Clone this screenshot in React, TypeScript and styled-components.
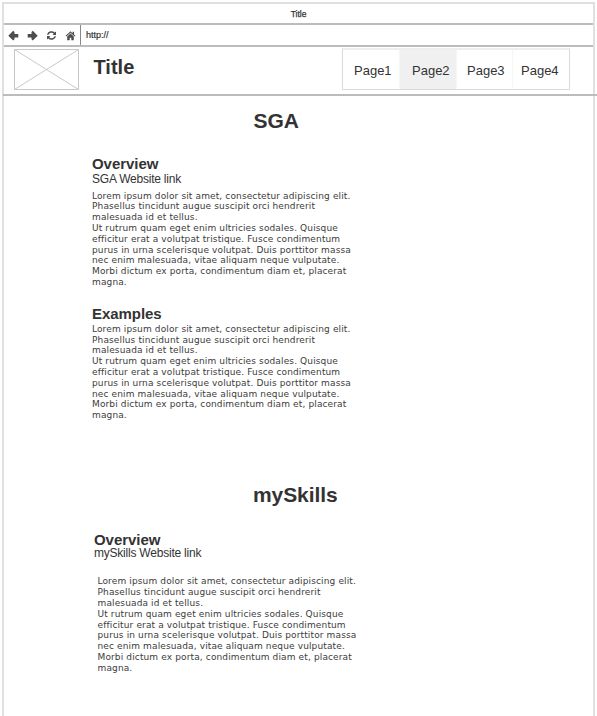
import React from "react";
import styled, { createGlobalStyle } from "styled-components";

const GlobalStyle = createGlobalStyle`
  * { box-sizing: border-box; }
  body { margin: 0; background: #fff; overflow: hidden; }
  h1, h2, h3, p { margin: 0; }
`;

const Window = styled.div`
  width: 595px;
  height: 716px;
  margin-left: 2px;
  padding-top: 2px;
  font-family: "Liberation Sans", Arial, sans-serif;
  color: #333;
`;

const Frame = styled.div`
  width: 593px;
  height: 714px;
  border: 2px solid #e0e0e0;
  border-bottom: 0;
`;

const TitleBar = styled.div`
  height: 21px;
  border-bottom: 2px solid #bcbcbc;
  text-align: center;
  font-size: 8.5px;
  line-height: 21px;
  -webkit-text-stroke: 0.25px #333;
`;

const Toolbar = styled.div`
  display: flex;
  height: 22px;
  border-bottom: 2px solid #bcbcbc;
`;

const Controls = styled.div`
  display: flex;
  align-items: center;
  gap: 8px;
  width: 77px;
  padding-left: 4px;
  border-right: 1px solid #888;
`;

const Icon = styled.svg`
  width: 11px;
  height: 11px;
  fill: #4d4d4d;
  filter: blur(0.45px);
`;

const Address = styled.div`
  padding-left: 5px;
  font-size: 9px;
  line-height: 20px;
  -webkit-text-stroke: 0.2px #333;
`;

const Header = styled.header`
  display: flex;
  width: 594px;
  height: 49px;
  margin-left: -1px;
  padding-left: 11px;
  border-bottom: 2px solid #bcbcbc;
`;

const Placeholder = styled.svg`
  display: block;
  flex: none;
  width: 65px;
  height: 41px;
  margin-top: 2px;
`;

const Brand = styled.h1`
  flex: none;
  width: 263px;
  padding: 8px 0 0 14.5px;
  font-size: 20px;
  line-height: 24px;
`;

const Nav = styled.nav`
  display: flex;
  flex: none;
  width: 228px;
  height: 42px;
  margin-top: 1px;
  border: 1px solid #d9d9d9;
  border-top: 2px solid #eee;
`;

const Tab = styled.a<{ $width: number; $active?: boolean; $inset: number }>`
  width: ${(p) => p.$width}px;
  padding-left: ${(p) => p.$inset}px;
  background: ${(p) => (p.$active ? "#f0f0f0" : "#fff")};
  border-right: 1px solid #f5f5f5;
  font-size: 13px;
  line-height: 41px;
  &:last-child { border-right: 0; }
`;

const Section = styled.section<{ $top: number }>`
  padding-top: ${(p) => p.$top}px;
`;

const SectionTitle = styled.h2<{ $inset: number }>`
  padding-left: ${(p) => p.$inset}px;
  font-size: 21px;
  line-height: 24px;
  letter-spacing: -0.08px;
`;

const Block = styled.div<{ $top: number; $inset: number }>`
  margin: ${(p) => p.$top}px 0 0 ${(p) => p.$inset}px;
`;

const Heading = styled.h3`
  font-size: 15px;
  line-height: 14px;
  letter-spacing: -0.05px;
`;

const LinkText = styled.p<{ $top: number }>`
  margin-top: ${(p) => p.$top}px;
  font-size: 12px;
  line-height: 13px;
  letter-spacing: -0.22px;
`;

const Copy = styled.p<{ $top: number; $shift?: number }>`
  margin: ${(p) => p.$top}px 0 0 ${(p) => p.$shift ?? 0}px;
  color: #3c3c3c;
  font-family: "DejaVu Sans", Verdana, sans-serif;
  font-size: 9px;
  line-height: 10.8px;
  letter-spacing: 0.13px;
  white-space: pre;
`;

const lorem = [
  "Lorem ipsum dolor sit amet, consectetur adipiscing elit.",
  "Phasellus tincidunt augue suscipit orci hendrerit",
  "malesuada id et tellus.",
  "Ut rutrum quam eget enim ultricies sodales. Quisque",
  "efficitur erat a volutpat tristique. Fusce condimentum",
  "purus in urna scelerisque volutpat. Duis porttitor massa",
  "nec enim malesuada, vitae aliquam neque vulputate.",
  "Morbi dictum ex porta, condimentum diam et, placerat",
  "magna.",
].join("\n");

export default function App() {
  return (
    <Window>
      <GlobalStyle />
      <Frame>
        <TitleBar>Title</TitleBar>
        <Toolbar>
          <Controls>
            <Icon viewBox="0 0 11 11">
              <path d="M.3 5.7 5.2 .8 6.5 2.1V4H10.3V7.4H6.5V9.3L5.2 10.6Z" />
            </Icon>
            <Icon viewBox="0 0 11 11">
              <path d="M10.7 5.7 5.8 .8 4.5 2.1V4H.7V7.4H4.5V9.3L5.8 10.6Z" />
            </Icon>
            <Icon viewBox="0 0 11 11">
              <path d="M1 4.8A4.5 4.3 0 0 1 8.8 2.6L10 1.5V5H6.5L7.8 3.7A3.1 3 0 0 0 2.5 4.8ZM10 6.2A4.5 4.3 0 0 1 2.2 8.4L1 9.5V6H4.5L3.2 7.3A3.1 3 0 0 0 8.5 6.2Z" />
            </Icon>
            <Icon viewBox="0 0 11 11">
              <path d="M.6 5.8 5.5 1.3 7.6 3.2V1.8H9V4.5L10.4 5.8 9.7 6.5 5.5 2.8 1.3 6.5ZM2.2 6.4 5.5 3.5 8.8 6.4V10.2H6.3V7.7H4.7V10.2H2.2Z" />
            </Icon>
          </Controls>
          <Address>http://</Address>
        </Toolbar>
        <Header>
          <Placeholder viewBox="0 0 65 41" fill="none" stroke="#c8c8c8">
            <path d="M.5 .5H64.5V40.5H.5ZL64.5 40.5M64.5 .5L.5 40.5" />
          </Placeholder>
          <Brand>Title</Brand>
          <Nav>
            <Tab $width={57} $inset={11}>Page1</Tab>
            <Tab $width={57} $inset={12} $active>Page2</Tab>
            <Tab $width={56} $inset={10}>Page3</Tab>
            <Tab $width={56} $inset={8}>Page4</Tab>
          </Nav>
        </Header>
        <Section $top={13}>
          <SectionTitle $inset={249.5}>SGA</SectionTitle>
          <Block $top={24} $inset={88}>
            <Heading>Overview</Heading>
            <LinkText $top={2}>SGA Website link</LinkText>
            <Copy $top={4.7}>{lorem}</Copy>
          </Block>
          <Block $top={19.1} $inset={88}>
            <Heading>Examples</Heading>
            <Copy $top={2.8}>{lorem}</Copy>
          </Block>
        </Section>
        <Section $top={62}>
          <SectionTitle $inset={249}>mySkills</SectionTitle>
          <Block $top={26} $inset={90}>
            <Heading>Overview</Heading>
            <LinkText $top={0}>mySkills Website link</LinkText>
            <Copy $top={16.5} $shift={3.5}>{lorem}</Copy>
          </Block>
        </Section>
      </Frame>
    </Window>
  );
}
